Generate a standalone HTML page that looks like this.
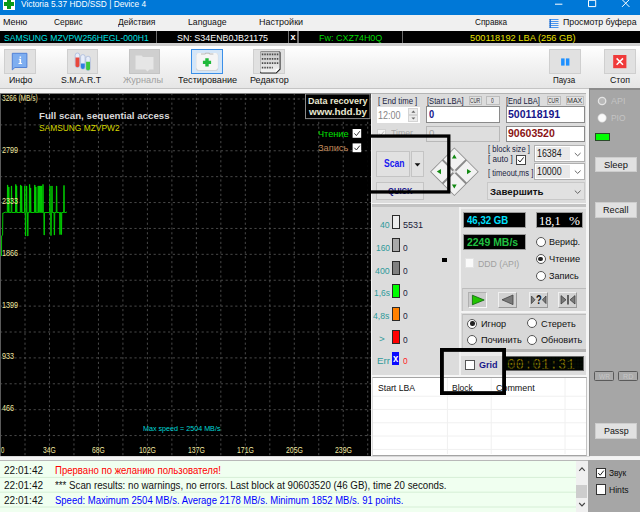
<!DOCTYPE html>
<html><head><meta charset="utf-8">
<style>
*{box-sizing:border-box;margin:0;padding:0}
html,body{width:640px;height:512px;overflow:hidden;background:#f0f0f0;font-family:"Liberation Sans",sans-serif;font-size:9px;color:#000}
.a,.t{position:absolute;white-space:nowrap}
.t{line-height:1em;z-index:5;display:inline-block;transform-origin:0 0}
.btn{background:#e1e1e1;border:1px solid #cfcfcf}
.inp{background:#fff;border:1px solid #8a8a8a}
.cb{background:#fff;border:1px solid #444}
.rb{background:#fff;border:1px solid #555;border-radius:50%;width:10px;height:10px}
.blk{border:1px solid #2a2a2a;width:7.6px;height:14px;left:392px}
.lcd{background:#000;border:1px solid #9a9a9a}
</style></head><body>
<!-- title -->
<div class="a" style="left:0;top:0;width:640px;height:15px;background:#0078d7"></div>
<div class="a" style="left:3px;top:0;width:12px;height:9.5px;background:#fff"></div>
<div class="a" style="left:7.3px;top:0;width:3.6px;height:8.5px;background:#0a9a1a"></div>
<div class="a" style="left:4px;top:2px;width:10px;height:3.6px;background:#0a9a1a"></div>
<svg class="a" style="left:550px;top:0" width="90" height="15">
<path d="M5 4.2h7.4" stroke="#fff" stroke-width="1" fill="none"/>
<path d="M38.5 0.3v6.3h7.2v-6.3z" stroke="#fff" stroke-width="1" fill="none"/>
<path d="M72 -0.5l7.4 7.4M79.4 -0.5l-7.4 7.4" stroke="#fff" stroke-width="1" fill="none"/>
</svg>
<!-- menu -->
<div class="a" style="left:0;top:15px;width:640px;height:15.6px;background:#f0f0f0"></div>
<svg class="a" style="left:549px;top:18px" width="11" height="11">
<path d="M0.5 1.5h9M0.5 3.5h9M0.5 5.5h9M0.5 7.5h9M0.5 9.5h9" stroke="#4a96ee" stroke-width="1"/>
<path d="M1.2 1v9" stroke="#1a6ad0" stroke-width="1.4"/>
</svg>
<!-- info bar -->
<div class="a" style="left:0;top:30.6px;width:640px;height:12.8px;background:#000"></div>
<div class="a" style="left:155.6px;top:31px;width:1.6px;height:12px;background:#6c6c6c"></div>
<div class="a" style="left:287.6px;top:31px;width:1.4px;height:12px;background:#707070"></div>
<div class="a" style="left:297.4px;top:31px;width:1.4px;height:12px;background:#707070"></div>
<div class="a" style="left:401.8px;top:31px;width:1.6px;height:12px;background:#6c6c6c"></div>
<!-- toolbar -->
<div class="a" style="left:0;top:43.4px;width:640px;height:2.4px;background:#cfcfcf"></div>
<div class="a" style="left:0;top:45.8px;width:640px;height:42.4px;background:linear-gradient(#ffffff,#f4f4f4 40%,#e6e6e6)"></div>
<div class="a" style="left:0;top:88.2px;width:640px;height:1.2px;background:#c4c4c4"></div>
<div class="a" style="left:0;top:89.4px;width:640px;height:3.6px;background:#f4f4f4"></div><div class="a" style="left:0;top:93px;width:371px;height:1px;background:#808080;z-index:3"></div><div class="a" style="left:371px;top:93px;width:215px;height:1px;background:#b4b4b4;z-index:3"></div>
<!-- toolbar buttons -->
<div class="a btn" style="left:4.3px;top:49.2px;width:31.8px;height:24.4px"></div>
<div class="a btn" style="left:66.6px;top:49.2px;width:31.8px;height:24.4px"></div>
<div class="a" style="left:128.6px;top:49.2px;width:31.8px;height:24.4px;background:#cfcfcf;border:1px solid #c4c4c4"></div>
<div class="a" style="left:190.8px;top:49.2px;width:32px;height:24.4px;background:#d4e6f8;border:1px solid #3a8fe8"></div>
<div class="a btn" style="left:253px;top:49.2px;width:31.8px;height:24.4px"></div>
<div class="a btn" style="left:549px;top:49.2px;width:32px;height:24.4px"></div>
<div class="a btn" style="left:604px;top:49.2px;width:32px;height:24.4px"></div>
<!-- icons -->
<svg class="a" style="left:0;top:44px" width="640" height="48" viewBox="0 44 640 48">
<!-- info -->
<path d="M12.3 53.3h14.6v14.2h-12l-2.6 2.4z" fill="#7eaef0" stroke="#4a7cd4" stroke-width="0.9" stroke-linejoin="round"/>
<rect x="19.6" y="56.5" width="1.5" height="1.4" fill="#fff"/><rect x="19.6" y="58.8" width="1.5" height="4.6" fill="#fff"/>
<rect x="18.8" y="58.8" width="1.4" height="0.9" fill="#fff"/><rect x="18.5" y="63" width="3.6" height="1" fill="#fff"/>
<!-- tubes -->
<rect x="75.2" y="53" width="4.5" height="14.5" rx="2.2" fill="#e8eefa" stroke="#a4b4d8" stroke-width="0.7"/><path d="M75.5 57.6h3.9v7.6a1.95 1.95 0 0 1-3.9 0z" fill="#e8483c"/>
<rect x="80.6" y="54.6" width="4.5" height="14.6" rx="2.2" fill="#e8eefa" stroke="#a4b4d8" stroke-width="0.7"/><path d="M80.9 63.6h3.9v3.4a1.95 1.95 0 0 1-3.9 0z" fill="#2f7fe0"/>
<rect x="85.8" y="56.2" width="4.5" height="14.4" rx="2.2" fill="#e8eefa" stroke="#a4b4d8" stroke-width="0.7"/><path d="M86.1 61.8h3.9v6.6a1.95 1.95 0 0 1-3.9 0z" fill="#3cc83c"/>
<!-- journals -->
<path d="M135.5 55.5h6l1.5 1.5h10.5v12.5h-4l-2 2l-2-2h-10z" fill="#e6e6e6"/>
<!-- test kit -->
<rect x="196" y="53" width="22.2" height="17.8" rx="2.6" fill="#cfcfcf"/>
<rect x="196.3" y="53" width="21.6" height="17" rx="2.4" fill="#f5f5f5"/>
<path d="M201 54h4.4v-0.8h4v0.8h4" fill="none" stroke="#b4b4b4" stroke-width="0.9"/>
<path d="M207 58.3v8.2M202.9 62.4h8.2" stroke="#1fb93a" stroke-width="3.4"/>
<!-- editor -->
<defs><linearGradient id="pg" x1="0" y1="0" x2="0" y2="1"><stop offset="0" stop-color="#c4c4c4"/><stop offset="1" stop-color="#f4f4f4"/></linearGradient></defs>
<path d="M261.6 51.2h17.4q1.6 0 1.6 1.6v16.6l-4.2 4.2h-14.8q-1.6 0-1.6-1.6v-19.2q0-1.6 1.6-1.6z" fill="#2a2a2a"/>
<path d="M261.6 51.4h16.6q1.4 0 1.4 1.4v15.8l-3.8 3.8h-14.2q-1.4 0-1.4-1.4v-18.2q0-1.4 1.4-1.4z" fill="url(#pg)"/>
<path d="M275.6 72.6l0.4-3.6l3.6-0.4z" fill="#fff"/>
<g stroke="#4a4a4a" stroke-width="1.7" stroke-dasharray="1.5 1"><path d="M261.8 54.4h17M261.8 58.8h17M261.8 63.2h17M261.8 67.6h11"/></g>
<!-- pause -->
<rect x="561.1" y="58.4" width="3.5" height="7.2" fill="#1e90ff"/><rect x="565.9" y="58.4" width="3.5" height="7.2" fill="#1e90ff"/>
<!-- stop -->
<rect x="613.2" y="55" width="13.2" height="13.2" fill="#f03a3a"/>
<path d="M616.6 58.4l6.4 6.4M623 58.4l-6.4 6.4" stroke="#fff" stroke-width="1.5"/>
</svg>

<!-- GRAPH -->
<div class="a" style="left:0;top:93px;width:371px;height:362.6px;background:#000"></div>
<svg class="a" style="left:0;top:93px" width="371" height="363" viewBox="0 93 371 363">
<g stroke="#5a5a5a" stroke-width="0.8" stroke-dasharray="2.2 2.6" fill="none">
<path d="M25.00 93v363"/><path d="M49.48 93v363"/><path d="M73.96 93v363"/><path d="M98.44 93v363"/><path d="M122.92 93v363"/><path d="M147.40 93v363"/><path d="M171.88 93v363"/><path d="M196.36 93v363"/><path d="M220.84 93v363"/><path d="M245.32 93v363"/><path d="M269.80 93v363"/><path d="M294.28 93v363"/><path d="M318.76 93v363"/><path d="M343.24 93v363"/><path d="M367.72 93v363"/>
<path d="M0 99.00h371"/><path d="M0 124.89h371"/><path d="M0 150.78h371"/><path d="M0 176.67h371"/><path d="M0 202.56h371"/><path d="M0 228.45h371"/><path d="M0 254.34h371"/><path d="M0 280.23h371"/><path d="M0 306.12h371"/><path d="M0 332.01h371"/><path d="M0 357.90h371"/><path d="M0 383.79h371"/><path d="M0 409.68h371"/><path d="M0 435.57h371"/>
</g>
<path d="M0.5 93v363" stroke="#5a5a5a" stroke-width="1"/>
<polyline points="1.50,256.0 1.60,236.0 2.60,235.0 2.80,213.0 4.00,213.0 5.00,212.0 6.50,212.5 7.25,212.5 7.46,185.0 7.74,185.0 7.95,212.5 8.45,212.5 8.66,187.0 8.94,187.0 9.15,212.5 11.15,212.5 11.36,186.0 11.64,186.0 11.85,212.5 15.45,212.5 15.66,184.5 15.94,184.5 16.15,212.5 16.25,212.5 16.46,186.0 16.74,186.0 16.95,212.5 20.25,212.5 20.46,185.0 20.74,185.0 20.95,212.5 21.25,212.5 21.46,186.0 21.74,186.0 21.95,212.5 24.45,212.5 24.66,186.0 24.94,186.0 25.15,212.5 25.25,212.5 25.46,236.0 25.74,236.0 25.95,212.5 26.25,212.5 26.46,186.0 26.74,186.0 26.95,212.5 27.45,212.5 27.66,236.0 27.94,236.0 28.15,212.5 29.25,212.5 29.46,184.5 29.74,184.5 29.95,212.5 30.25,212.5 30.46,188.0 30.74,188.0 30.95,212.5 34.45,212.5 34.66,185.0 34.94,185.0 35.15,212.5 35.45,212.5 35.66,187.0 35.94,187.0 36.15,212.5 37.85,212.5 38.06,186.0 38.34,186.0 38.55,212.5 39.05,212.5 39.26,186.0 39.54,186.0 39.75,212.5 40.25,212.5 40.46,186.0 40.74,186.0 40.95,212.5 41.25,212.5 41.46,186.0 41.74,186.0 41.95,212.5 42.65,212.5 42.86,184.5 43.14,184.5 43.35,212.5 43.85,212.5 44.06,235.0 44.34,235.0 44.55,212.5 49.65,212.5 49.86,186.0 50.14,186.0 50.35,212.5 50.65,212.5 50.86,235.5 51.14,235.5 51.35,212.5 51.65,212.5 51.86,186.0 52.14,186.0 52.35,212.5 54.05,212.5 54.26,235.0 54.54,235.0 54.75,212.5 56.25,212.5 56.46,186.0 56.74,186.0 56.95,212.5 59.65,212.5 59.86,234.5 60.14,234.5 60.35,212.5 61.05,212.5 61.26,234.5 61.54,234.5 61.75,212.5 63.65,212.5 63.86,185.5 64.14,185.5 64.35,212.5 66.00,212.5 67.00,211.8" fill="none" stroke="#00d800" stroke-width="0.9" stroke-linejoin="bevel"/>
<rect x="305.5" y="94" width="64.5" height="24.6" fill="#000" stroke="#8a8a8a" stroke-width="1"/>
<rect x="352.6" y="129" width="8.6" height="8.8" fill="#fff"/><path d="M354.4 133.4l2 2.2l3.4-4.4" stroke="#333" stroke-width="1" fill="none"/>
<rect x="352.6" y="143.4" width="8.6" height="8.8" fill="#fff"/><path d="M354.4 147.8l2 2.2l3.4-4.4" stroke="#333" stroke-width="1" fill="none"/>
</svg>
<div class="a" style="left:0;top:455.6px;width:590px;height:1.6px;background:#d8d8d8"></div>

<!-- RIGHT PANEL -->
<div class="a" style="left:371px;top:93px;width:219px;height:363px;background:#dcdcdc"></div>
<div class="a" style="left:371px;top:93px;width:1.2px;height:363px;background:#f4f4f4"></div>
<div class="a" style="left:586.4px;top:93px;width:3.2px;height:363px;background:#f4f4f4"></div>
<!-- top inputs -->
<div class="a" style="left:377px;top:107px;width:42.6px;height:16px;background:#fff"></div>
<div class="a" style="left:407.6px;top:108.4px;width:10.8px;height:6.6px;background:#ececec;border:1px solid #d4d4d4"></div><div class="a" style="left:407.6px;top:115.4px;width:10.8px;height:6.6px;background:#ececec;border:1px solid #d4d4d4"></div>
<svg class="a" style="left:407.6px;top:108px" width="11" height="14"><path d="M3.4 4.8l2-2.2l2 2.2zM3.4 9.4l2 2.2l2-2.2z" fill="#666"/></svg>
<div class="a inp" style="left:426px;top:106px;width:74.2px;height:16.6px"></div>
<div class="a inp" style="left:506px;top:106px;width:78.6px;height:16.6px"></div>
<div class="a" style="left:426px;top:125.6px;width:74.2px;height:16.2px;background:#dedede;border:1px solid #b8b8b8"></div>
<div class="a inp" style="left:506px;top:125.6px;width:78.6px;height:16.2px"></div>
<div class="a btn" style="left:468.6px;top:95.8px;width:13.6px;height:9.4px;border-color:#bdbdbd"></div>
<div class="a btn" style="left:485.6px;top:95.8px;width:14px;height:9.4px;border-color:#bdbdbd"></div>
<div class="a btn" style="left:547px;top:95.8px;width:13.8px;height:9.4px;border-color:#bdbdbd"></div>
<div class="a btn" style="left:565.6px;top:95.8px;width:18.4px;height:9.4px;border-color:#bdbdbd"></div>
<div class="a" style="left:377px;top:128.8px;width:9px;height:9px;background:#f4f4f4;border:1px solid #d0d0d0"></div>
<svg class="a" style="left:377px;top:128.8px" width="9" height="9"><path d="M2 4.4l1.8 2l3.2-4" stroke="#b8b8b8" stroke-width="1" fill="none"/></svg>
<!-- scan row -->
<div class="a btn" style="left:376.4px;top:151px;width:33.2px;height:26.2px;border-color:#c4c4c4"></div>
<div class="a btn" style="left:411px;top:151px;width:13.2px;height:26.2px;border-color:#c4c4c4"></div>
<svg class="a" style="left:411px;top:160px" width="13" height="9"><path d="M3.6 3.2h5.8l-2.9 3.2z" fill="#111"/></svg>
<div class="a btn" style="left:376.4px;top:182.4px;width:47.8px;height:17.4px;border-color:#c4c4c4"></div>
<!-- diamond -->
<svg class="a" style="left:428px;top:145px" width="54" height="54" viewBox="428 145 54 54">
<g transform="rotate(45 454.4 171.7)">
<rect x="437.2" y="154.5" width="34.4" height="34.4" fill="#8a8a8a"/>
<rect x="438" y="155.3" width="15.4" height="15.4" fill="#f2f2f2"/>
<rect x="455.4" y="155.3" width="15.4" height="15.4" fill="#f2f2f2"/>
<rect x="438" y="172.7" width="15.4" height="15.4" fill="#f2f2f2"/>
<rect x="455.4" y="172.7" width="15.4" height="15.4" fill="#f2f2f2"/>
<rect x="452.9" y="170.2" width="3" height="3" fill="#dcdcdc"/>
</g>
<path d="M454.3 154.4l2.4 4.2h-4.8z" fill="#128a12"/>
<path d="M454.3 188.4l2.4-4h-4.8z" fill="#128a12"/>
<path d="M436.8 171.6l4.2-2.6v5.2z" fill="#128a12"/>
<path d="M471.2 171.6l-4.2-2.6v5.2z" fill="#128a12"/>
</svg>
<!-- block size -->
<div class="a cb" style="left:516.4px;top:155px;width:9.4px;height:9.6px"></div>
<svg class="a" style="left:516.4px;top:155px" width="10" height="10"><path d="M2 4.8l2 2.2l3.6-4.6" stroke="#222" stroke-width="1" fill="none"/></svg>
<div class="a" style="left:534.4px;top:145px;width:50.2px;height:17.2px;background:#fff;border:1px solid #b0b0b0"></div>
<div class="a" style="left:536.4px;top:147px;width:33.4px;height:13.2px;background:#e9e9e9"></div>
<div class="a" style="left:534.4px;top:163px;width:50.2px;height:16.8px;background:#fff;border:1px solid #b0b0b0"></div>
<div class="a" style="left:536.4px;top:165px;width:33.4px;height:12.8px;background:#e9e9e9"></div>
<div class="a btn" style="left:487px;top:182.4px;width:98px;height:17.8px;border-color:#c8c8c8"></div>
<svg class="a" style="left:572px;top:148px" width="12" height="50"><path d="M2.8 5l2.9 2.8l2.9-2.8M2.8 22.6l2.9 2.8l2.9-2.8M2.8 42.6l2.9 2.8l2.9-2.8" stroke="#555" stroke-width="0.9" fill="none"/></svg>
<!-- section divider -->
<div class="a" style="left:372px;top:203px;width:214.4px;height:1px;background:#f6f6f6"></div>
<div class="a" style="left:372px;top:204px;width:214.4px;height:3px;background:#c2c2c2"></div>
<div class="a" style="left:459px;top:207px;width:127.4px;height:2px;background:#ececec"></div>
<!-- legend blocks -->
<div class="a blk" style="top:215px;background:#ececec"></div>
<div class="a blk" style="top:237.8px;background:#a9a9a9"></div>
<div class="a blk" style="top:260.6px;background:#808080"></div>
<div class="a blk" style="top:283.6px;background:#00ff00"></div>
<div class="a blk" style="top:306.6px;background:#ff8000"></div>
<div class="a blk" style="top:329.6px;background:#ff0000"></div>
<div class="a" style="left:392px;top:352px;width:7.2px;height:12.6px;background:#0a0aff"></div>
<div class="a" style="left:442.4px;top:258px;width:4.6px;height:4.2px;background:#000"></div>
<!-- mid divider -->
<div class="a" style="left:459px;top:207px;width:2px;height:168.6px;background:#f2f2f2"></div>
<!-- readouts -->
<div class="a lcd" style="left:463px;top:212.4px;width:63px;height:15.8px"></div>
<div class="a lcd" style="left:463px;top:234.4px;width:63px;height:15.8px"></div>
<div class="a lcd" style="left:535.6px;top:212.4px;width:47.6px;height:15.8px"></div>
<div class="a rb" style="left:535.6px;top:237px"></div>
<div class="a rb" style="left:535.6px;top:254px"></div><div class="a" style="left:538.4px;top:256.8px;width:4.4px;height:4.4px;border-radius:50%;background:#222"></div>
<div class="a rb" style="left:535.6px;top:271px"></div>
<div class="a" style="left:465.4px;top:258.4px;width:9px;height:9.4px;background:#fafafa;border:1px solid #e4e4e4"></div>
<!-- play panel -->
<div class="a" style="left:462px;top:288px;width:124.4px;height:23px;background:#d8d8d8;border-top:1px solid #bcbcbc;border-left:1px solid #c4c4c4"></div>
<div class="a" style="left:461.4px;top:311px;width:125px;height:2px;background:#f4f4f4"></div>
<div class="a" style="left:462px;top:314px;width:124.4px;height:35.2px;background:#d8d8d8;border-top:1px solid #bcbcbc;border-left:1px solid #c4c4c4"></div>
<div class="a" style="left:468px;top:292px;width:19px;height:15.6px;background:#cccccc;border:1px solid #b0b0b0;border-right-color:#f6f6f6;border-bottom-color:#f6f6f6"></div>
<div class="a" style="left:498.4px;top:292px;width:18.8px;height:15.6px;background:#d2d2d2;border:1px solid #f0f0f0;border-right-color:#9a9a9a;border-bottom-color:#9a9a9a"></div>
<div class="a" style="left:529.2px;top:292px;width:18.6px;height:15.6px;background:#d2d2d2;border:1px solid #f0f0f0;border-right-color:#9a9a9a;border-bottom-color:#9a9a9a"></div>
<div class="a" style="left:558.4px;top:292px;width:18.8px;height:15.6px;background:#d2d2d2;border:1px solid #f0f0f0;border-right-color:#9a9a9a;border-bottom-color:#9a9a9a"></div>
<svg class="a" style="left:462px;top:288px" width="124" height="24" viewBox="462 288 124 24">
<path d="M472.4 295.2v9.6l11.8-4.8z" fill="#22c400" stroke="#0a640a" stroke-width="0.8"/>
<path d="M513 295v9.6l-11-4.8z" fill="#7a7a7a" stroke="#444" stroke-width="0.8"/>
<path d="M531.4 296v7.6l3.6-3.8zM546 296v7.6l-3.6-3.8z" fill="#7a7a7a" stroke="#333" stroke-width="0.7"/>
<path d="M561 295.6v8.4l5-4.2zM575 295.6v8.4l-5-4.2z" fill="#7a7a7a" stroke="#333" stroke-width="0.7"/>
<path d="M568 295v9.6" stroke="#222" stroke-width="1.3"/>
</svg>
<!-- radios panel -->
<div class="a rb" style="left:467.4px;top:318.6px"></div><div class="a" style="left:470.2px;top:321.4px;width:4.4px;height:4.4px;border-radius:50%;background:#222"></div>
<div class="a rb" style="left:527.4px;top:318.4px"></div>
<div class="a rb" style="left:467.4px;top:334.6px"></div>
<div class="a rb" style="left:527.4px;top:334.6px"></div>
<div class="a" style="left:461.4px;top:349.2px;width:125px;height:2.5px;background:#b4b4b4"></div>
<div class="a" style="left:461.4px;top:351.7px;width:125px;height:4.2px;background:#ececec"></div>
<!-- grid row -->
<div class="a cb" style="left:465px;top:360px;width:10px;height:9.8px;border-color:#555"></div>
<div class="a" style="left:504px;top:356px;width:80.2px;height:15.2px;background:#030a03;border:1px solid #666"></div>
<div class="a" style="left:505px;top:357px;width:78.2px;height:13.2px;z-index:6;background-image:repeating-linear-gradient(90deg,rgba(0,0,0,.45) 0 0.5px,transparent 0.5px 1.4px),repeating-linear-gradient(0deg,rgba(0,0,0,.45) 0 0.5px,transparent 0.5px 1.4px)"></div>
<!-- table -->
<div class="a" style="left:371px;top:375.2px;width:216px;height:1.6px;background:#f6f6f6"></div>
<div class="a" style="left:372px;top:377px;width:214.6px;height:78.6px;background:#fff;border:1px solid #a4a4a4;border-left-color:#dedede;border-right-color:#c4c4c4"></div>
<svg class="a" style="left:372px;top:377px" width="215" height="78" viewBox="372 377 215 78">
<g stroke="#f0f0f0" stroke-width="1"><path d="M447.4 378v76M491.2 378v76M565 378v76M373 396.2h213M373 409.4h213M373 422.8h213M373 436h213M373 449.4h213"/></g>
</svg>

<!-- SIDE PANEL -->
<div class="a" style="left:589px;top:88px;width:51px;height:368.4px;background:#a6a6a6;border-top:2px solid #8c8c8c;border-left:1.6px solid #8c8c8c"></div>
<svg class="a" style="left:596px;top:95px" width="12" height="12"><circle cx="6.1" cy="6" r="3.7" fill="#b8b8b8" stroke="#e4e4e4" stroke-width="1.3"/></svg>
<svg class="a" style="left:596px;top:111.7px" width="12" height="12"><circle cx="6.1" cy="6" r="4.2" fill="#fafafa" stroke="#d4d4d4" stroke-width="0.6"/></svg>
<div class="a" style="left:595.4px;top:133.4px;width:14.4px;height:7.6px;background:#00ff00;border:1px solid #2a4a2a"></div>
<div class="a" style="left:595.4px;top:156.8px;width:41.2px;height:15.4px;background:#e1e1e1;border:1px solid #cdcdcd"></div>
<div class="a" style="left:595.4px;top:202.2px;width:41.2px;height:15.6px;background:#e1e1e1;border:1px solid #cdcdcd"></div>
<div class="a" style="left:595.4px;top:423px;width:41.2px;height:15.6px;background:#e1e1e1;border:1px solid #cdcdcd"></div>
<div class="a" style="left:594px;top:371.4px;width:20px;height:9.4px;background:#aaaaaa;border:1.2px solid #5a5a5a;border-radius:1.5px"></div>
<div class="a" style="left:617.8px;top:371.4px;width:20.4px;height:9.4px;background:#aaaaaa;border:1.2px solid #5a5a5a;border-radius:1.5px"></div>

<!-- BOTTOM -->
<div class="a" style="left:0;top:456.6px;width:640px;height:3.6px;background:#f4f4f4"></div>
<div class="a" style="left:0;top:460.2px;width:588px;height:52px;background:#f0fff0;border-top:1px solid #b8b8b8"></div>
<svg class="a" style="left:0;top:461px" width="576" height="51" viewBox="0 461 576 51"><g stroke="#d6efd6" stroke-width="1"><path d="M0 477.4h576M0 492.2h576M0 507h576"/></g></svg>
<div class="a" style="left:575.6px;top:461.2px;width:12px;height:50.8px;background:#f0f0f0"></div>
<div class="a" style="left:576.2px;top:485px;width:10.8px;height:13.2px;background:#cdcdcd"></div>
<svg class="a" style="left:575.6px;top:461px" width="12" height="51"><path d="M3.2 9.8l2.8-3l2.8 3M3.2 42l2.8 3l2.8-3" stroke="#444" stroke-width="1.1" fill="none"/></svg>
<div class="a" style="left:588px;top:460.2px;width:52px;height:52px;background:#a6a6a6"></div>
<div class="a cb" style="left:595.5px;top:467.6px;width:10px;height:10.2px;border-color:#333"></div>
<svg class="a" style="left:595.5px;top:467.6px" width="10" height="10"><path d="M2.2 5l2 2.2l3.6-4.6" stroke="#222" stroke-width="1" fill="none"/></svg>
<div class="a cb" style="left:595.5px;top:484.4px;width:10px;height:10.2px;border-color:#333"></div>

<span class="t" style="left:21.00px;top:0.00px;font-size:9.1px;color:#fff;transform:scaleX(0.915);">Victoria 5.37 HDD/SSD | Device 4</span>
<span class="t" style="left:2.50px;top:18.00px;font-size:9.1px;color:#111;transform:scaleX(0.990);">Меню</span>
<span class="t" style="left:53.50px;top:18.00px;font-size:9.1px;color:#111;transform:scaleX(0.918);">Сервис</span>
<span class="t" style="left:117.50px;top:18.00px;font-size:9.1px;color:#111;transform:scaleX(0.939);">Действия</span>
<span class="t" style="left:188.00px;top:18.00px;font-size:9.1px;color:#111;transform:scaleX(0.953);">Language</span>
<span class="t" style="left:259.00px;top:18.00px;font-size:9.1px;color:#111;transform:scaleX(0.989);">Настройки</span>
<span class="t" style="left:475.00px;top:18.00px;font-size:9.1px;color:#111;transform:scaleX(0.901);">Справка</span>
<span class="t" style="left:562.50px;top:18.00px;font-size:9.1px;color:#111;transform:scaleX(0.966);">Просмотр буфера</span>
<span class="t" style="left:4.00px;top:34.00px;font-size:9.1px;color:#00e0e0;transform:scaleX(0.952);">SAMSUNG MZVPW256HEGL-000H1</span>
<span class="t" style="left:177.00px;top:34.00px;font-size:9.1px;color:#fff;transform:scaleX(0.981);">SN: S34ENB0JB21175</span>
<span class="t" style="left:290.50px;top:33.00px;font-size:9px;color:#fff;font-weight:bold;transform:scaleX(1.000);">x</span>
<span class="t" style="left:318.70px;top:34.00px;font-size:9.1px;color:#00d800;transform:scaleX(0.987);">Fw: CXZ74H0Q</span>
<span class="t" style="left:470.00px;top:34.00px;font-size:9.1px;color:#e8e000;transform:scaleX(1.020);">500118192 LBA (256 GB)</span>
<span class="t" style="left:9.00px;top:76.00px;font-size:9.1px;color:#111;transform:scaleX(0.969);">Инфо</span>
<span class="t" style="left:61.00px;top:76.00px;font-size:9.1px;color:#111;transform:scaleX(0.953);">S.M.A.R.T</span>
<span class="t" style="left:123.00px;top:76.00px;font-size:9.1px;color:#a0a0a0;transform:scaleX(1.008);">Журналы</span>
<span class="t" style="left:178.00px;top:76.00px;font-size:9.1px;color:#111;transform:scaleX(1.002);">Тестирование</span>
<span class="t" style="left:250.00px;top:76.00px;font-size:9.1px;color:#111;transform:scaleX(0.990);">Редактор</span>
<span class="t" style="left:552.50px;top:76.00px;font-size:9.1px;color:#111;transform:scaleX(0.878);">Пауза</span>
<span class="t" style="left:609.50px;top:76.00px;font-size:9.1px;color:#111;transform:scaleX(0.967);">Стоп</span>
<span class="t" style="left:2.00px;top:95.00px;font-size:8.2px;color:#f0e8a0;transform:scaleX(0.802);">3266 (MB/s)</span>
<span class="t" style="left:2.00px;top:147.00px;font-size:8.2px;color:#f0e8a0;transform:scaleX(0.879);">2799</span>
<span class="t" style="left:2.00px;top:198.00px;font-size:8.2px;color:#f0e8a0;transform:scaleX(0.879);">2333</span>
<span class="t" style="left:2.00px;top:250.00px;font-size:8.2px;color:#f0e8a0;transform:scaleX(0.879);">1866</span>
<span class="t" style="left:2.00px;top:302.00px;font-size:8.2px;color:#f0e8a0;transform:scaleX(0.879);">1399</span>
<span class="t" style="left:2.00px;top:353.00px;font-size:8.2px;color:#f0e8a0;transform:scaleX(0.872);">933</span>
<span class="t" style="left:2.00px;top:405.00px;font-size:8.2px;color:#f0e8a0;transform:scaleX(0.872);">466</span>
<span class="t" style="left:1.20px;top:447.00px;font-size:8.2px;color:#f0e8a0;transform:scaleX(0.720);">0</span>
<span class="t" style="left:43.07px;top:447.00px;font-size:8.2px;color:#f0e8a0;transform:scaleX(0.824);">34G</span>
<span class="t" style="left:91.98px;top:447.00px;font-size:8.2px;color:#f0e8a0;transform:scaleX(0.824);">68G</span>
<span class="t" style="left:138.90px;top:447.00px;font-size:8.2px;color:#f0e8a0;transform:scaleX(0.844);">102G</span>
<span class="t" style="left:187.95px;top:447.00px;font-size:8.2px;color:#f0e8a0;transform:scaleX(0.844);">137G</span>
<span class="t" style="left:236.80px;top:447.00px;font-size:8.2px;color:#f0e8a0;transform:scaleX(0.844);">171G</span>
<span class="t" style="left:285.80px;top:447.00px;font-size:8.2px;color:#f0e8a0;transform:scaleX(0.844);">205G</span>
<span class="t" style="left:334.70px;top:447.00px;font-size:8.2px;color:#f0e8a0;transform:scaleX(0.844);">239G</span>
<span class="t" style="left:143.40px;top:425.00px;font-size:7.8px;color:#00d8d8;transform:scaleX(0.919);">Max speed = 2504 MB/s</span>
<span class="t" style="left:38.60px;top:111.00px;font-size:9.8px;color:#d8d8d8;font-weight:bold;transform:scaleX(0.991);">Full scan, sequential access</span>
<span class="t" style="left:38.60px;top:123.00px;font-size:9.4px;color:#d8d800;transform:scaleX(0.894);">SAMSUNG MZVPW2</span>
<span class="t" style="left:308.00px;top:97.00px;font-size:9px;color:#e8e8d0;font-weight:bold;transform:scaleX(0.999);">Data recovery</span>
<span class="t" style="left:309.10px;top:108.00px;font-size:9px;color:#e8e8d0;font-weight:bold;transform:scaleX(1.100);">www.hdd.by</span>
<span class="t" style="left:317.50px;top:130.00px;font-size:9.1px;color:#00e000;transform:scaleX(1.007);">Чтение</span>
<span class="t" style="left:317.50px;top:144.00px;font-size:9.1px;color:#c08858;transform:scaleX(1.013);">Запись</span>
<span class="t" style="left:378.20px;top:97.00px;font-size:8.3px;color:#1a2340;transform:scaleX(0.936);">[ End time ]</span>
<span class="t" style="left:378.00px;top:111.00px;font-size:10px;color:#868686;transform:scaleX(0.903);">12:00</span>
<span class="t" style="left:426.60px;top:97.00px;font-size:8.3px;color:#1a2340;transform:scaleX(0.914);">[Start LBA]</span>
<span class="t" style="left:470.00px;top:98.00px;font-size:6.6px;color:#333;transform:scaleX(0.716);">CUR</span>
<span class="t" style="left:491.00px;top:98.00px;font-size:6.6px;color:#333;transform:scaleX(0.750);">0</span>
<span class="t" style="left:506.40px;top:97.00px;font-size:8.3px;color:#1a2340;transform:scaleX(0.907);">[End LBA]</span>
<span class="t" style="left:548.40px;top:98.00px;font-size:6.6px;color:#333;transform:scaleX(0.757);">CUR</span>
<span class="t" style="left:567.00px;top:97.00px;font-size:7.4px;color:#333;transform:scaleX(0.957);">MAX</span>
<span class="t" style="left:429.00px;top:110.00px;font-size:10px;color:#16168a;font-weight:bold;transform:scaleX(0.933);">0</span>
<span class="t" style="left:508.40px;top:110.00px;font-size:10px;color:#16168a;font-weight:bold;transform:scaleX(1.053);">500118191</span>
<span class="t" style="left:508.40px;top:129.00px;font-size:10px;color:#8a1414;font-weight:bold;transform:scaleX(1.051);">90603520</span>
<span class="t" style="left:391.00px;top:129.00px;font-size:9.1px;color:#a8a8a8;transform:scaleX(0.962);">Timer</span>
<span class="t" style="left:429.00px;top:128.00px;font-size:9.6px;color:#a0a0a0;transform:scaleX(1.000);">0</span>
<span class="t" style="left:383.60px;top:159.00px;font-size:10px;color:#1818f0;font-weight:bold;transform:scaleX(0.857);">Scan</span>
<span class="t" style="left:387.60px;top:187.00px;font-size:9.1px;color:#16168a;font-weight:bold;transform:scaleX(0.834);">QUICK</span>
<span class="t" style="left:488.00px;top:145.00px;font-size:8.3px;color:#1a2340;transform:scaleX(0.917);">[ block size ]</span>
<span class="t" style="left:488.00px;top:155.00px;font-size:8.3px;color:#1a2340;transform:scaleX(0.974);">[ auto ]</span>
<span class="t" style="left:488.00px;top:169.00px;font-size:8.3px;color:#1a2340;transform:scaleX(0.909);">[ timeout,ms ]</span>
<span class="t" style="left:537.00px;top:149.00px;font-size:10px;color:#202020;transform:scaleX(0.885);">16384</span>
<span class="t" style="left:537.00px;top:167.00px;font-size:10px;color:#202020;transform:scaleX(0.885);">10000</span>
<span class="t" style="left:489.60px;top:187.00px;font-size:9.8px;color:#111;font-weight:bold;transform:scaleX(0.991);">Завершить</span>
<span class="t" style="left:380.40px;top:221.00px;font-size:9.1px;color:#2f9a9a;transform:scaleX(0.955);">40</span>
<span class="t" style="left:376.00px;top:244.00px;font-size:9.1px;color:#2f9a9a;transform:scaleX(0.926);">160</span>
<span class="t" style="left:375.40px;top:267.00px;font-size:9.1px;color:#2f9a9a;transform:scaleX(0.966);">400</span>
<span class="t" style="left:373.60px;top:289.00px;font-size:9.1px;color:#2f9a9a;transform:scaleX(0.930);">1,6s</span>
<span class="t" style="left:373.20px;top:312.00px;font-size:9.1px;color:#2f9a9a;transform:scaleX(0.952);">4,8s</span>
<span class="t" style="left:379.00px;top:335.00px;font-size:9.1px;color:#2f9a9a;transform:scaleX(1.080);">&gt;</span>
<span class="t" style="left:377.00px;top:357.00px;font-size:9.1px;color:#2f9a9a;transform:scaleX(1.075);">Err</span>
<span class="t" style="left:402.60px;top:221.00px;font-size:9.1px;color:#1a1a3a;transform:scaleX(0.991);">5531</span>
<span class="t" style="left:402.60px;top:244.00px;font-size:9.1px;color:#1a1a3a;transform:scaleX(0.920);">0</span>
<span class="t" style="left:402.60px;top:267.00px;font-size:9.1px;color:#1a1a3a;transform:scaleX(0.920);">0</span>
<span class="t" style="left:402.60px;top:289.00px;font-size:9.1px;color:#1a1a3a;transform:scaleX(0.920);">0</span>
<span class="t" style="left:402.60px;top:312.00px;font-size:9.1px;color:#1a1a3a;transform:scaleX(0.920);">0</span>
<span class="t" style="left:402.60px;top:336.00px;font-size:9.1px;color:#1a1a3a;transform:scaleX(0.920);">0</span>
<span class="t" style="left:402.60px;top:357.00px;font-size:9.1px;color:#ff2020;transform:scaleX(0.920);">0</span>
<span class="t" style="left:392.70px;top:353.00px;font-size:11.5px;color:#fff;font-weight:bold;transform:scaleX(0.829);">x</span>
<span class="t" style="left:467.00px;top:216.00px;font-size:10px;color:#00e0ff;font-weight:bold;transform:scaleX(0.963);">46,32 GB</span>
<span class="t" style="left:467.00px;top:238.00px;font-size:10px;color:#20c040;font-weight:bold;transform:scaleX(1.045);">2249 MB/s</span>
<span class="t" style="left:539.37px;top:215.00px;font-size:12px;color:#fff;font-family:'Liberation Serif';transform:scaleX(1.030);">18,1</span>
<span class="t" style="left:569.00px;top:215.00px;font-size:12px;color:#fff;font-family:'Liberation Serif';transform:scaleX(1.100);">%</span>
<span class="t" style="left:535.60px;top:294.00px;font-size:12px;color:#111;font-weight:bold;transform:scaleX(0.771);">?</span>
<span class="t" style="left:549.00px;top:238.00px;font-size:9.1px;color:#111;transform:scaleX(0.995);">Вериф.</span>
<span class="t" style="left:549.00px;top:255.00px;font-size:9.1px;color:#111;transform:scaleX(1.024);">Чтение</span>
<span class="t" style="left:549.00px;top:272.00px;font-size:9.1px;color:#111;transform:scaleX(0.997);">Запись</span>
<span class="t" style="left:478.40px;top:260.00px;font-size:9.1px;color:#a0a0a0;transform:scaleX(0.960);">DDD (API)</span>
<span class="t" style="left:481.00px;top:320.00px;font-size:9.1px;color:#111;transform:scaleX(1.003);">Игнор</span>
<span class="t" style="left:541.00px;top:320.00px;font-size:9.1px;color:#111;transform:scaleX(1.010);">Стереть</span>
<span class="t" style="left:481.00px;top:336.00px;font-size:9.1px;color:#111;transform:scaleX(1.013);">Починить</span>
<span class="t" style="left:541.00px;top:336.00px;font-size:9.1px;color:#111;transform:scaleX(0.999);">Обновить</span>
<span class="t" style="left:479.00px;top:361.00px;font-size:9.1px;color:#16168a;font-weight:bold;transform:scaleX(0.992);">Grid</span>
<span class="t" style="left:507.00px;top:358.00px;font-size:14.5px;color:#807000;font-family:'Liberation Mono';transform:scaleX(0.975);">00:01:31</span>
<span class="t" style="left:377.60px;top:383.00px;font-size:9.8px;color:#111;transform:scaleX(0.882);">Start LBA</span>
<span class="t" style="left:451.70px;top:383.00px;font-size:9.8px;color:#111;transform:scaleX(0.865);">Block</span>
<span class="t" style="left:496.00px;top:383.00px;font-size:9.8px;color:#111;transform:scaleX(0.912);">Comment</span>
<span class="t" style="left:610.60px;top:97.00px;font-size:9.1px;color:#c4c4c4;transform:scaleX(0.984);">API</span>
<span class="t" style="left:610.60px;top:114.00px;font-size:9.1px;color:#c4c4c4;transform:scaleX(0.924);">PIO</span>
<span class="t" style="left:603.70px;top:161.00px;font-size:9.1px;color:#111;transform:scaleX(1.026);">Sleep</span>
<span class="t" style="left:603.00px;top:206.00px;font-size:9.1px;color:#111;transform:scaleX(1.006);">Recall</span>
<span class="t" style="left:603.80px;top:427.00px;font-size:9.1px;color:#111;transform:scaleX(0.976);">Passp</span>
<span class="t" style="left:598.60px;top:374.00px;font-size:6.8px;color:#c6c6c6;transform:scaleX(0.964);">WR</span>
<span class="t" style="left:622.60px;top:374.00px;font-size:6.8px;color:#c6c6c6;transform:scaleX(1.050);">RD</span>
<span class="t" style="left:608.80px;top:469.00px;font-size:9.1px;color:#111;transform:scaleX(0.925);">Звук</span>
<span class="t" style="left:609.00px;top:486.00px;font-size:9.1px;color:#111;transform:scaleX(0.945);">Hints</span>
<span class="t" style="left:3.50px;top:466.00px;font-size:10px;color:#111;transform:scaleX(1.003);">22:01:42</span>
<span class="t" style="left:3.50px;top:481.00px;font-size:10px;color:#111;transform:scaleX(1.003);">22:01:42</span>
<span class="t" style="left:3.50px;top:496.00px;font-size:10px;color:#111;transform:scaleX(1.003);">22:01:42</span>
<span class="t" style="left:55.00px;top:466.00px;font-size:10px;color:#ff0000;transform:scaleX(0.958);">Прервано по желанию пользователя!</span>
<span class="t" style="left:55.00px;top:481.00px;font-size:10px;color:#111;transform:scaleX(0.973);">*** Scan results: no warnings, no errors. Last block at 90603520 (46 GB), time 20 seconds.</span>
<span class="t" style="left:55.00px;top:496.00px;font-size:10px;color:#0000ff;transform:scaleX(0.950);">Speed: Maximum 2504 MB/s. Average 2178 MB/s. Minimum 1852 MB/s. 91 points.</span>

<!-- annotation rectangles -->
<svg class="a" style="left:360px;top:130px;z-index:9" width="150" height="270" viewBox="360 130 150 270"><rect x="368.75" y="136.05" width="80.05" height="55.9" fill="none" stroke="#000" stroke-width="3.3"/><rect x="441.93" y="349.93" width="62.15" height="43.15" fill="none" stroke="#000" stroke-width="3.85"/></svg>
</body></html>
